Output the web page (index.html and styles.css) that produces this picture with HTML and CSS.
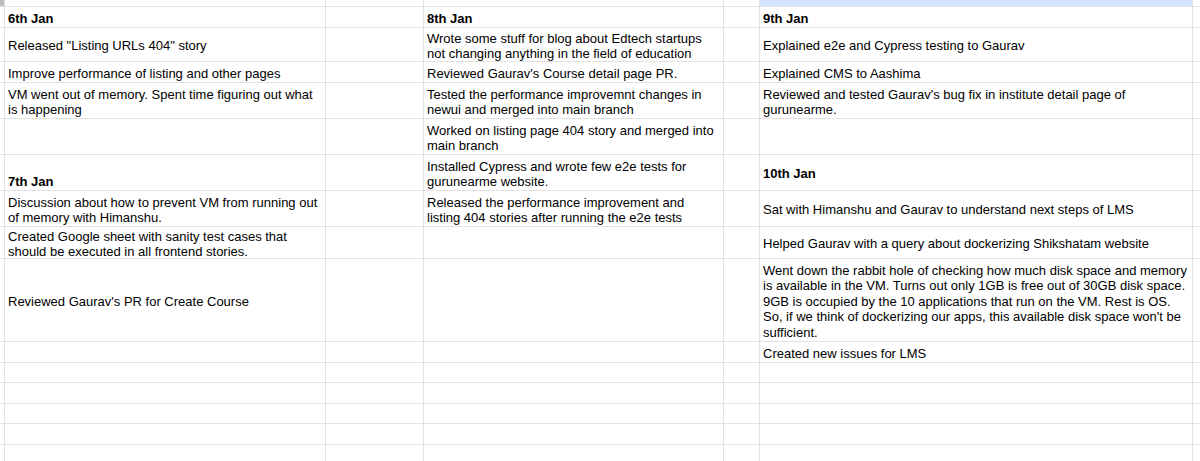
FILE: index.html
```html
<!DOCTYPE html>
<html>
<head>
<meta charset="utf-8">
<link rel="stylesheet" href="styles.css">
</head>
<body>
<div class="sheet">
  <!-- row 0 -->
  <div class="c hdr corner"></div><div class="c"></div><div class="c"></div><div class="c"></div><div class="c"></div><div class="c sel"></div><div class="c"></div>
  <!-- row 1 -->
  <div class="c hdr"></div><div class="c b">6th Jan</div><div class="c"></div><div class="c b">8th Jan</div><div class="c"></div><div class="c b">9th Jan</div><div class="c"></div>
  <!-- row 2 -->
  <div class="c hdr"></div><div class="c">Released "Listing URLs 404" story</div><div class="c"></div><div class="c">Wrote some stuff for blog about Edtech startups not changing anything in the field of education</div><div class="c"></div><div class="c">Explained e2e and Cypress testing to Gaurav</div><div class="c"></div>
  <!-- row 3 -->
  <div class="c hdr"></div><div class="c">Improve performance of listing and other pages</div><div class="c"></div><div class="c">Reviewed Gaurav's Course detail page PR.</div><div class="c"></div><div class="c">Explained CMS to Aashima</div><div class="c"></div>
  <!-- row 4 -->
  <div class="c hdr"></div><div class="c">VM went out of memory. Spent time figuring out what is happening</div><div class="c"></div><div class="c">Tested the performance improvemnt changes in newui and merged into main branch</div><div class="c"></div><div class="c">Reviewed and tested Gaurav's bug fix in institute detail page of gurunearme.</div><div class="c"></div>
  <!-- row 5 -->
  <div class="c hdr"></div><div class="c"></div><div class="c"></div><div class="c">Worked on listing page 404 story and merged into main branch</div><div class="c"></div><div class="c"></div><div class="c"></div>
  <!-- row 6 -->
  <div class="c hdr"></div><div class="c b bottom">7th Jan</div><div class="c"></div><div class="c">Installed Cypress and wrote few e2e tests for gurunearme website.</div><div class="c"></div><div class="c b">10th Jan</div><div class="c"></div>
  <!-- row 7 -->
  <div class="c hdr"></div><div class="c">Discussion about how to prevent VM from running out of memory with Himanshu.</div><div class="c"></div><div class="c">Released the performance improvement and listing 404 stories after running the e2e tests</div><div class="c"></div><div class="c">Sat with Himanshu and Gaurav to understand next steps of LMS</div><div class="c"></div>
  <!-- row 8 -->
  <div class="c hdr"></div><div class="c">Created Google sheet with sanity test cases that should be executed in all frontend stories.</div><div class="c"></div><div class="c"></div><div class="c"></div><div class="c">Helped Gaurav with a query about dockerizing Shikshatam website</div><div class="c"></div>
  <!-- row 9 -->
  <div class="c hdr"></div><div class="c">Reviewed Gaurav's PR for Create Course</div><div class="c"></div><div class="c"></div><div class="c"></div><div class="c">Went down the rabbit hole of checking how much disk space and memory is available in the VM. Turns out only 1GB is free out of 30GB disk space. 9GB is occupied by the 10 applications that run on the VM. Rest is OS. So, if we think of dockerizing our apps, this available disk space won't be sufficient.</div><div class="c"></div>
  <!-- row 10 -->
  <div class="c hdr"></div><div class="c"></div><div class="c"></div><div class="c"></div><div class="c"></div><div class="c">Created new issues for LMS</div><div class="c"></div>
  <!-- rows 11-15 -->
  <div class="c hdr"></div><div class="c"></div><div class="c"></div><div class="c"></div><div class="c"></div><div class="c"></div><div class="c"></div>
  <div class="c hdr"></div><div class="c"></div><div class="c"></div><div class="c"></div><div class="c"></div><div class="c"></div><div class="c"></div>
  <div class="c hdr"></div><div class="c"></div><div class="c"></div><div class="c"></div><div class="c"></div><div class="c"></div><div class="c"></div>
  <div class="c hdr"></div><div class="c"></div><div class="c"></div><div class="c"></div><div class="c"></div><div class="c"></div><div class="c"></div>
  <div class="c hdr"></div><div class="c"></div><div class="c"></div><div class="c"></div><div class="c"></div><div class="c"></div><div class="c"></div>
</div>
</body>
</html>
```

FILE: styles.css
```css
html, body {
  margin: 0;
  padding: 0;
  background: #ffffff;
  overflow: hidden;
}

.sheet {
  display: grid;
  width: 1200px;
  height: 461px;
  overflow: hidden;
  grid-template-columns: 4px 320px 97px 299px 35px 432px 1fr;
  grid-template-rows: 6px 20px 33px 20px 35px 35px 35px 35px 31px 82px 20px 19px 20px 19px 20px 20px;
  gap: 1px;
  background: #e2e2e2;
  font-family: "Liberation Sans", Arial, sans-serif;
  font-size: 13px;
  line-height: 15.5px;
  color: #000000;
}

.c {
  background: #ffffff;
  padding: 3px 3px 0 3px;
  display: flex;
  align-items: center;
  overflow: hidden;
  min-width: 0;
}

.hdr {
  padding: 0;
  background: #ffffff;
}

.corner {
  background: #bdbdbd;
}

.sel {
  padding: 0;
  background: #d3e3fd;
}

.b {
  font-weight: bold;
}

.bottom {
  align-items: flex-end;
  padding-top: 0;
  padding-bottom: 1px;
}
```
